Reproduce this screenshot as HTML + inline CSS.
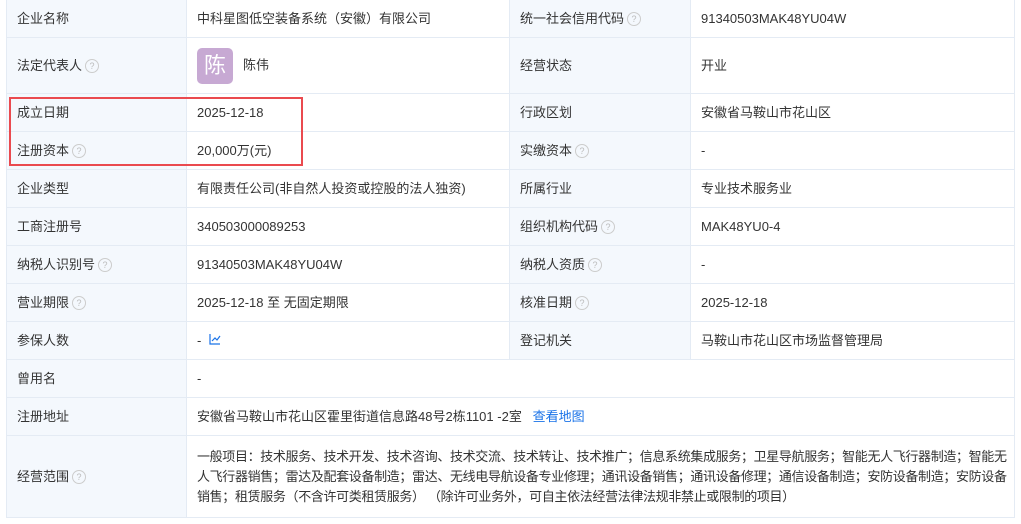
<!DOCTYPE html><html><head><meta charset="utf-8"><style>
body{margin:0;background:#fff;width:1021px;height:524px;overflow:hidden;font-family:"Liberation Sans","Noto Sans CJK SC",sans-serif;font-size:13px;color:#333}
table{position:absolute;left:6px;top:-1px;border-collapse:collapse;table-layout:fixed;width:1008px}
td{border:1px solid #e4ebf4;padding:0 0 0 10px;vertical-align:middle;line-height:20px}
td.l{background:#f4f8fd;color:#333}
.q{display:inline-block;width:12px;height:12px;border:1px solid #ccc;border-radius:50%;color:#bbb;font-size:9px;line-height:12px;text-align:center;vertical-align:top;margin-top:3px;margin-left:3px}
.av{display:inline-block;width:36px;height:36px;background:#c7a9d3;color:#fff;border-radius:5px;font-size:22px;line-height:36px;text-align:center;vertical-align:middle;margin-right:10px}
a{color:#1a73e8;text-decoration:none}
.box{position:absolute;left:9px;top:97px;width:290px;height:65px;border:2px solid #ea4a4f}
</style></head><body>
<table>
<colgroup><col style="width:180px"><col style="width:323px"><col style="width:181px"><col style="width:324px"></colgroup>
<tr style="height:38px"><td class="l">企业名称</td><td>中科星图低空装备系统（安徽）有限公司</td><td class="l">统一社会信用代码<span class="q">?</span></td><td>91340503MAK48YU04W</td></tr>
<tr style="height:56px"><td class="l">法定代表人<span class="q">?</span></td><td><span class="av">陈</span>陈伟</td><td class="l">经营状态</td><td>开业</td></tr>
<tr style="height:38px"><td class="l">成立日期</td><td>2025-12-18</td><td class="l">行政区划</td><td>安徽省马鞍山市花山区</td></tr>
<tr style="height:38px"><td class="l">注册资本<span class="q">?</span></td><td>20,000万(元)</td><td class="l">实缴资本<span class="q">?</span></td><td>-</td></tr>
<tr style="height:38px"><td class="l">企业类型</td><td>有限责任公司(非自然人投资或控股的法人独资)</td><td class="l">所属行业</td><td>专业技术服务业</td></tr>
<tr style="height:38px"><td class="l">工商注册号</td><td>340503000089253</td><td class="l">组织机构代码<span class="q">?</span></td><td>MAK48YU0-4</td></tr>
<tr style="height:38px"><td class="l">纳税人识别号<span class="q">?</span></td><td>91340503MAK48YU04W</td><td class="l">纳税人资质<span class="q">?</span></td><td>-</td></tr>
<tr style="height:38px"><td class="l">营业期限<span class="q">?</span></td><td>2025-12-18 至 无固定期限</td><td class="l">核准日期<span class="q">?</span></td><td>2025-12-18</td></tr>
<tr style="height:38px"><td class="l">参保人数</td><td>- &nbsp;<svg width="12" height="11" viewBox="0 0 12 11" style="vertical-align:0"><path d="M1 0V10H11M3 7L6 4L8 6L11 2" fill="none" stroke="#1a73e8" stroke-width="1.2"/></svg></td><td class="l">登记机关</td><td>马鞍山市花山区市场监督管理局</td></tr>
<tr style="height:38px"><td class="l">曾用名</td><td colspan="3">-</td></tr>
<tr style="height:38px"><td class="l">注册地址</td><td colspan="3">安徽省马鞍山市花山区霍里街道信息路48号2栋1101 -2室 &nbsp; <a>查看地图</a></td></tr>
<tr style="height:82px"><td class="l">经营范围<span class="q">?</span></td><td colspan="3" style="padding-right:0;letter-spacing:-0.35px">一般项目：技术服务、技术开发、技术咨询、技术交流、技术转让、技术推广；信息系统集成服务；卫星导航服务；智能无人飞行器制造；智能无人飞行器销售；雷达及配套设备制造；雷达、无线电导航设备专业修理；通讯设备销售；通讯设备修理；通信设备制造；安防设备制造；安防设备销售；租赁服务（不含许可类租赁服务） （除许可业务外，可自主依法经营法律法规非禁止或限制的项目）</td></tr>
</table>
<div class="box"></div>
</body></html>
